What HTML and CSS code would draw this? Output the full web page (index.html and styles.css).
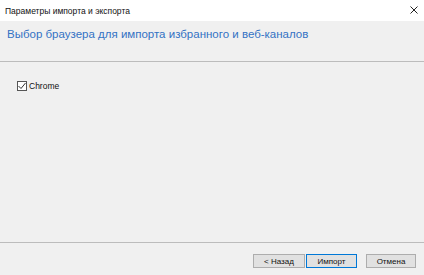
FILE: index.html
```html
<!DOCTYPE html>
<html lang="ru">
<head>
    <meta charset="UTF-8">
    <meta name="viewport" content="width=device-width, initial-scale=1.0">
    <title>Параметры импорта и экспорта</title>
    <link rel="stylesheet" href="styles.css">
</head>
<body>
    <div class="dialog">
        <div class="titlebar">
            <span class="title">Параметры импорта и экспорта</span>
            <svg class="close" width="8" height="8" viewBox="0 0 8 8">
                <path d="M0.5 0.5 L7.5 7.5 M7.5 0.5 L0.5 7.5" stroke="#222" stroke-width="1" fill="none"/>
            </svg>
        </div>

        <div class="header">
            <h1>Выбор браузера для импорта избранного и веб-каналов</h1>
        </div>

        <div class="content">
            <label class="check-row">
                <span class="checkbox">
                    <svg width="8" height="8" viewBox="0 0 8 8">
                        <path d="M0.5 4 L3 6.5 L7.5 1" stroke="#333" stroke-width="1" fill="none"/>
                    </svg>
                </span>
                Chrome
            </label>
        </div>

        <div class="footer">
            <button type="button" class="btn">&lt; Назад</button>
            <button type="button" class="btn default">Импорт</button>
            <button type="button" class="btn cancel">Отмена</button>
        </div>
    </div>
</body>
</html>
```

FILE: styles.css
```css
html, body {
    margin: 0;
    padding: 0;
}
body {
    font-family: "Liberation Sans", Arial, sans-serif;
    background-color: #f0f0f0;
    color: #000;
}
.dialog {
    width: 424px;
    height: 275px;
    display: flex;
    flex-direction: column;
}
.titlebar {
    height: 21px;
    background-color: #fff;
    display: flex;
    align-items: center;
    justify-content: space-between;
    padding: 0 6px 0 5px;
}
.title {
    font-size: 8.5px;
    color: #111;
}
.close {
    margin-top: -1px;
}
.header {
    height: 40px;
    border-bottom: 1px solid #bcbcbc;
    padding-left: 7px;
}
h1 {
    margin: 7px 0 0;
    font-size: 11.5px;
    font-weight: normal;
    color: #3372c4;
}
.content {
    flex: 1;
    padding: 19px 17px;
}
.check-row {
    display: flex;
    align-items: center;
    font-size: 8.5px;
    color: #111;
}
.checkbox {
    width: 8px;
    height: 8px;
    border: 1px solid #555;
    background-color: #fff;
    display: flex;
    align-items: center;
    justify-content: center;
    margin-right: 2px;
}
.footer {
    height: 33px;
    border-top: 1px solid #bcbcbc;
    display: flex;
    align-items: flex-start;
    justify-content: flex-end;
    padding: 11px 8px 0 0;
    box-sizing: border-box;
}
.btn {
    width: 52px;
    height: 14px;
    padding: 0;
    font-family: "Liberation Sans", Arial, sans-serif;
    font-size: 8px;
    color: #111;
    background-color: #e1e1e1;
    border: 1px solid #adadad;
    border-radius: 0;
}
.default {
    width: 51px;
    margin-left: 1px;
    border: 1px solid #0078d7;
}
.cancel {
    width: 50px;
    margin-left: 9px;
}
```
